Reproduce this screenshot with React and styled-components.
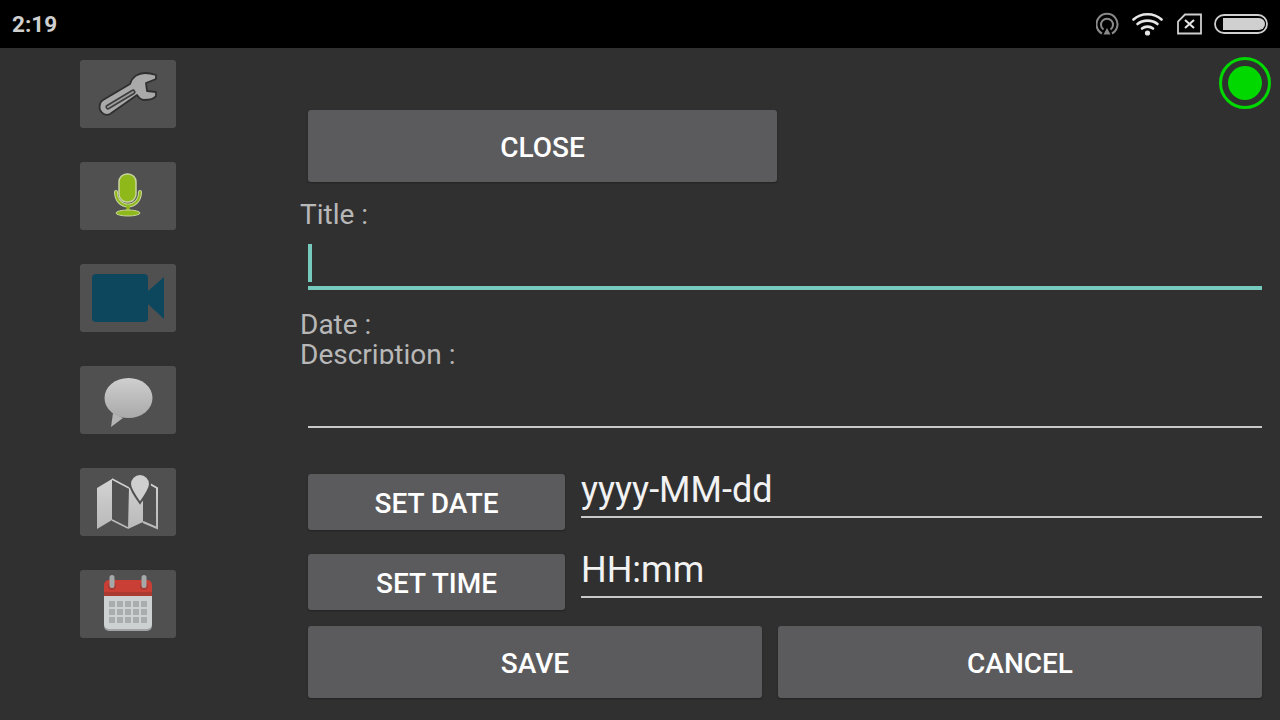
import React from 'react';
import styled, { createGlobalStyle } from 'styled-components';

const GlobalStyle = createGlobalStyle`
  html, body {
    margin: 0;
    padding: 0;
    background: #303030;
    font-family: Roboto, "Liberation Sans", sans-serif;
  }
`;

const Screen = styled.div`
  position: relative;
  width: 1280px;
  height: 720px;
  overflow: hidden;
  display: flex;
  flex-direction: column;
  background: #303030;
`;

const StatusBar = styled.header`
  height: 48px;
  flex: none;
  background: #000;
  display: flex;
  align-items: center;
  justify-content: space-between;
  padding: 0 12px;
`;

const Clock = styled.span`
  color: #cfcfcf;
  font-size: 22.500px;
  font-weight: 700;
`;

const StatusIcons = styled.div`
  display: flex;
  align-items: center;
  gap: 12px;
  svg { display: block; }
`;

const Body = styled.div`
  flex: 1;
  display: flex;
`;

const Sidebar = styled.nav`
  width: 300px;
  flex: none;
  box-sizing: border-box;
  padding: 12px 0 0 80px;
  display: flex;
  flex-direction: column;
  gap: 34px;
`;

const ToolButton = styled.div`
  width: 96px;
  height: 68px;
  border-radius: 3px;
  background: #505050;
  svg { display: block; }
`;

const Form = styled.main`
  flex: 1;
  padding: 62px 18px 0 0;
  display: flex;
  flex-direction: column;
`;

const Button = styled.div`
  height: ${p => p.$h || 72}px;
  width: ${p => (p.$w ? `${p.$w}px` : 'auto')};
  flex: ${p => (p.$w ? 'none' : 1)};
  box-sizing: border-box;
  padding-top: 3px;
  border-radius: 3px;
  background: #5b5b5d;
  box-shadow: 0 1px 2px rgba(0, 0, 0, 0.3);
  color: #fff;
  font-size: 28px;
  font-weight: 500;
  display: flex;
  align-items: center;
  justify-content: center;
`;

const CloseRow = styled.div`
  margin-left: 8px;
`;

const Label = styled.div`
  color: #b8b8b8;
  font-size: 28px;
  line-height: 30px;
  height: ${p => p.$h || 30}px;
  margin-top: ${p => p.$mt || 0}px;
  padding-top: 1px;
  box-sizing: content-box;
  overflow: hidden;
`;

const TitleField = styled.div`
  margin: 14px 0 19px 8px;
  height: 46px;
  box-sizing: border-box;
  border-bottom: 4px solid #75cabd;
`;

const Caret = styled.div`
  width: 4px;
  height: 38px;
  background: #75cabd;
`;

const DescriptionField = styled.div`
  margin-left: 8px;
  height: 64px;
  box-sizing: border-box;
  border-bottom: 2px solid #c8c8c8;
`;

const PickerRow = styled.div`
  margin: ${p => p.$mt}px 0 0 8px;
  display: flex;
  align-items: flex-start;
  gap: 16px;
`;

const PickerValue = styled.div`
  flex: 1;
  height: 44px;
  box-sizing: border-box;
  padding-top: 1px;
  border-bottom: 2px solid #c8c8c8;
  color: #f2f2f2;
  font-size: 36px;
  line-height: 31px;
`;

const ActionRow = styled.div`
  margin: 16px 0 0 8px;
  display: flex;
  gap: 16px;
`;

const Indicator = styled.div`
  position: absolute;
  top: 57px;
  right: 9px;
  width: 52px;
  height: 52px;
  box-sizing: border-box;
  border: 3px solid #00d800;
  border-radius: 50%;
  display: flex;
  align-items: center;
  justify-content: center;
  &::after {
    content: '';
    width: 34px;
    height: 34px;
    border-radius: 50%;
    background: #00d800;
  }
`;

const Hotspot = () => (
  <svg width="24" height="24" viewBox="0 0 24 24" fill="none" stroke="#8a8a8a" strokeWidth="2">
    <path d="M6 21.500A10.500 10.500 0 1 1 16 21.500" />
    <path d="M7.500 17.500A6 6 0 1 1 14.500 17.500" />
    <path d="M11 16l-3.500 6.500h7z" fill="#8a8a8a" stroke="none" />
  </svg>
);

const Wifi = () => (
  <svg width="33" height="24" viewBox="0 0 33 24" fill="none" stroke="#e6e6e6" strokeWidth="2.600" strokeLinecap="round">
    <path d="M1.500 7.500C9 0.500 22 0.500 29.500 7.500" />
    <path d="M5.500 12C11 7.500 20 7.500 25.500 12" />
    <path d="M10 16.500C13 14 18 14 21 16.500" />
    <circle cx="15.500" cy="21" r="2.600" fill="#e6e6e6" stroke="none" />
  </svg>
);

const NoSim = () => (
  <svg width="25" height="22" viewBox="0 0 25 22" fill="none" stroke="#cfcfcf" strokeWidth="1.800">
    <path d="M8 1.500H24V20.500H1V8.500z" />
    <path d="M8 7l9 8M17 7l-9 8" stroke="#e8e8e8" strokeWidth="2" />
  </svg>
);

const Battery = () => (
  <svg width="54" height="20" viewBox="0 0 54 20" fill="none">
    <rect x="1" y="1" width="52" height="18" rx="9" stroke="#cfcfcf" strokeWidth="1.800" />
    <path d="M9 4H45a6 6 0 0 1 0 12H9z" fill="#cfcfcf" />
  </svg>
);

const WrenchIcon = () => (
  <svg width="96" height="68" viewBox="0 0 96 68">
    <path
      d="M23 40L50 24C52 17 58 13 65 13C69 13 73 14 76 15L76 19L66 23L67 31L76 32L76 36C74 39 69 40 64 40C61 40 59 38 57 35L30 54C26 56 22 54 20 50C19 46 20 42 23 40Z"
      fill="#a9a9a9"
      stroke="#2f2f2f"
      strokeWidth="1.800"
      strokeLinejoin="round"
    />
    <path d="M28 47L53 32" stroke="#3c3c3c" strokeWidth="5" strokeLinecap="round" />
    <path d="M28 47L53 32" stroke="#9a9a9a" strokeWidth="2" strokeLinecap="round" />
  </svg>
);

const MicIcon = () => (
  <svg width="96" height="68" viewBox="0 0 96 68" fill="none">
    <path d="M36 30C36 48 60 48 60 30" stroke="#c9d5a0" strokeWidth="4" strokeLinecap="round" />
    <path d="M36 30C36 48 60 48 60 30" stroke="#8fb81a" strokeWidth="2" strokeLinecap="round" />
    <rect x="39" y="12" width="17" height="28" rx="8" fill="#8fb81a" stroke="#c9d5a0" strokeWidth="1.500" />
    <path d="M48 43V49" stroke="#8fb81a" strokeWidth="3.500" />
    <ellipse cx="48" cy="51" rx="12" ry="3" fill="#8fb81a" stroke="#c9d5a0" />
  </svg>
);

const VideoIcon = () => (
  <svg width="96" height="68" viewBox="0 0 96 68" fill="#0d475e">
    <rect x="12" y="10" width="56" height="48" rx="4" />
    <path d="M68 27L84 13V55L68 40Z" />
  </svg>
);

const ChatIcon = () => (
  <svg width="96" height="68" viewBox="0 0 96 68">
    <defs>
      <linearGradient id="chatFill" x1="0" y1="0" x2="0" y2="1">
        <stop offset="0" stopColor="#cfcfcf" />
        <stop offset="1" stopColor="#a9a9a9" />
      </linearGradient>
    </defs>
    <path d="M33 47L31 61L43 52Z" fill="#b4b4b4" />
    <ellipse cx="48.500" cy="32" rx="24" ry="20" fill="url(#chatFill)" />
  </svg>
);

const MapIcon = () => (
  <svg width="96" height="68" viewBox="0 0 96 68">
    <defs>
      <linearGradient id="mapFill" gradientUnits="userSpaceOnUse" x1="0" y1="10" x2="0" y2="62">
        <stop offset="0" stopColor="#d4d4d4" />
        <stop offset="1" stopColor="#b8b8b8" />
      </linearGradient>
    </defs>
    <path d="M17 20L32 11V52L17 61Z" fill="url(#mapFill)" />
    <path d="M32 11L49 20M32 52L48 60" fill="none" stroke="url(#mapFill)" strokeWidth="1.500" />
    <path d="M49 20L63 13V54L48 61Z" fill="url(#mapFill)" />
    <path d="M63 54L77 60V20L70 16" fill="none" stroke="url(#mapFill)" strokeWidth="2" />
    <path
      d="M60 6A10 10 0 0 1 70 16C70 21 65 28 60 35C55 28 50 21 50 16A10 10 0 0 1 60 6Z"
      fill="#cfcfcf"
      stroke="#505050"
      strokeWidth="2"
    />
  </svg>
);

const CalendarIcon = () => {
  const cols = [29, 37, 45, 53, 61];
  const rows = [31, 39, 47];
  return (
    <svg width="96" height="68" viewBox="0 0 96 68">
      <path d="M24 24H72V56a5 5 0 0 1-5 5H29a5 5 0 0 1-5-5Z" fill="#a0a4a4" />
      <path d="M24 24H72V54a5 5 0 0 1-5 5H29a5 5 0 0 1-5-5Z" fill="#ced1d1" />
      <path d="M29 10H67a5 5 0 0 1 5 5V26H24V15a5 5 0 0 1 5-5Z" fill="#c93f35" />
      <rect x="24" y="22" width="48" height="4" fill="#ab3a31" />
      <circle cx="32" cy="16" r="4" fill="#ab3a31" />
      <circle cx="64" cy="16" r="4" fill="#ab3a31" />
      <rect x="29.500" y="5" width="5" height="13" rx="2.500" fill="#a6a9a9" />
      <rect x="61.500" y="5" width="5" height="13" rx="2.500" fill="#a6a9a9" />
      {rows.map(y =>
        cols.map(x => <rect key={`${x}-${y}`} x={x} y={y} width="6" height="6" fill="#a9adad" />)
      )}
    </svg>
  );
};

const tools = [WrenchIcon, MicIcon, VideoIcon, ChatIcon, MapIcon, CalendarIcon];

export default function App() {
  return (
    <Screen>
      <GlobalStyle />
      <StatusBar>
        <Clock>2:19</Clock>
        <StatusIcons>
          <Hotspot />
          <Wifi />
          <NoSim />
          <Battery />
        </StatusIcons>
      </StatusBar>
      <Body>
        <Sidebar>
          {tools.map((Icon, i) => (
            <ToolButton key={i}>
              <Icon />
            </ToolButton>
          ))}
        </Sidebar>
        <Form>
          <CloseRow>
            <Button $w={469}>CLOSE</Button>
          </CloseRow>
          <Label $mt={17}>Title :</Label>
          <TitleField>
            <Caret />
          </TitleField>
          <Label $h={29}>Date :</Label>
          <Label $h={24}>Description :</Label>
          <DescriptionField />
          <PickerRow $mt={46}>
            <Button $w={257} $h={56}>SET DATE</Button>
            <PickerValue>yyyy-MM-dd</PickerValue>
          </PickerRow>
          <PickerRow $mt={24}>
            <Button $w={257} $h={56}>SET TIME</Button>
            <PickerValue>HH:mm</PickerValue>
          </PickerRow>
          <ActionRow>
            <Button $w={454}>SAVE</Button>
            <Button>CANCEL</Button>
          </ActionRow>
        </Form>
      </Body>
      <Indicator />
    </Screen>
  );
}
